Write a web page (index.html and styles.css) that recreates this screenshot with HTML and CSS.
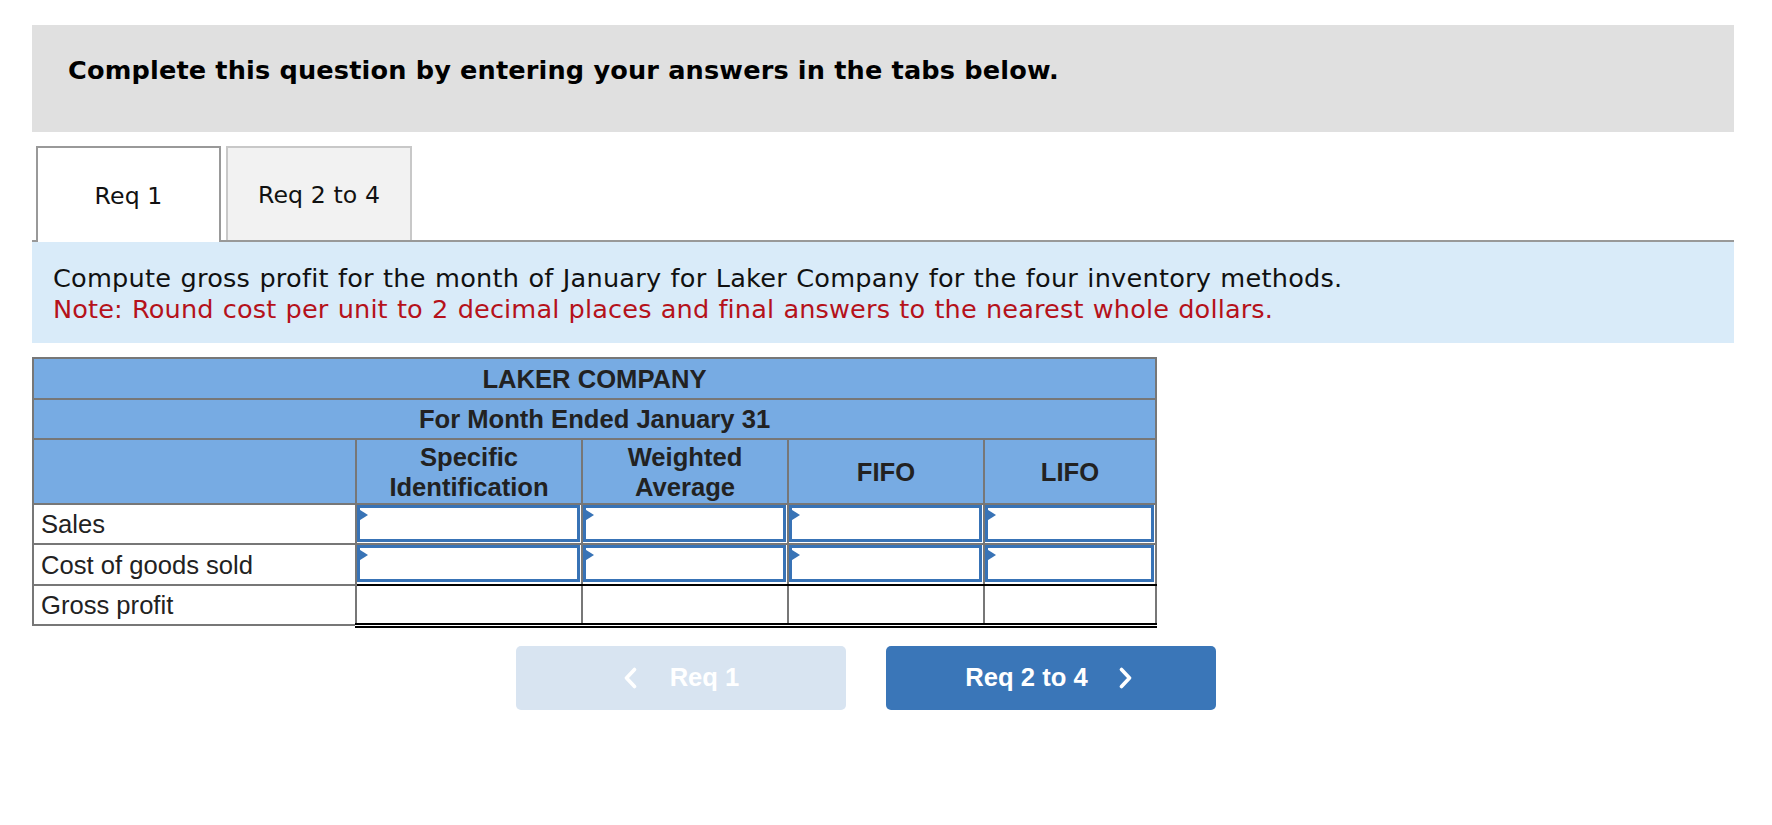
FILE: index.html
```html
<!DOCTYPE html>
<html lang="en">
<head>
<meta charset="utf-8">
<title>Laker Company</title>
<link rel="stylesheet" href="styles.css">
</head>
<body>
<div class="page">
  <div class="prompt">Complete this question by entering your answers in the tabs below.</div>

  <div class="tabs">
    <div class="tab tab-active">Req 1</div>
    <div class="tab tab-idle">Req 2 to 4</div>
  </div>

  <div class="instructions">
    <div class="instr-line">Compute gross profit for the month of January for Laker Company for the four inventory methods.</div>
    <div class="instr-line note">Note: Round cost per unit to 2 decimal places and final answers to the nearest whole dollars.</div>
  </div>

  <table class="sheet">
    <colgroup>
      <col class="c-label">
      <col class="c-spec">
      <col class="c-wa">
      <col class="c-fifo">
      <col class="c-lifo">
    </colgroup>
    <tr class="r-title">
      <th colspan="5">LAKER COMPANY</th>
    </tr>
    <tr class="r-title2">
      <th colspan="5">For Month Ended January 31</th>
    </tr>
    <tr class="r-head">
      <th></th>
      <th>Specific<br>Identification</th>
      <th>Weighted<br>Average</th>
      <th>FIFO</th>
      <th>LIFO</th>
    </tr>
    <tr class="r-data">
      <td class="label">Sales</td>
      <td class="val"><div class="inp"></div></td>
      <td class="val"><div class="inp"></div></td>
      <td class="val"><div class="inp"></div></td>
      <td class="val"><div class="inp"></div></td>
    </tr>
    <tr class="r-data r-cogs">
      <td class="label">Cost of goods sold</td>
      <td class="val"><div class="inp"></div></td>
      <td class="val"><div class="inp"></div></td>
      <td class="val"><div class="inp"></div></td>
      <td class="val"><div class="inp"></div></td>
    </tr>
    <tr class="r-total">
      <td class="label">Gross profit</td>
      <td class="tot"></td>
      <td class="tot"></td>
      <td class="tot"></td>
      <td class="tot"></td>
    </tr>
  </table>

  <div class="nav">
    <div class="btn btn-prev">
      <svg class="chev" width="14" height="22" viewBox="0 0 14 22"><polyline points="11.5,2.5 3.5,11 11.5,19.5" fill="none" stroke="#ffffff" stroke-width="3.6" stroke-linecap="round" stroke-linejoin="round"/></svg>
      <span>Req 1</span>
    </div>
    <div class="btn btn-next">
      <span>Req 2 to 4</span>
      <svg class="chev" width="14" height="22" viewBox="0 0 14 22"><polyline points="2.5,2.5 10.5,11 2.5,19.5" fill="none" stroke="#ffffff" stroke-width="3.6" stroke-linecap="round" stroke-linejoin="round"/></svg>
    </div>
  </div>
</div>
</body>
</html>
```
FILE: styles.css
```css
html, body {
  margin: 0;
  padding: 0;
  background: #ffffff;
}

.page {
  margin: 25px 0 0 32px;
  width: 1702px;
}

.prompt {
  background: #e0e0e0;
  height: 107px;
  box-sizing: border-box;
  padding: 30px 36px 0;
  font-family: "DejaVu Sans", Verdana, sans-serif;
  font-weight: bold;
  font-size: 25.6px;
  letter-spacing: 0.15px;
  line-height: 31px;
  color: #000;
}

.tabs {
  margin-top: 14px;
  height: 96px;
  box-sizing: border-box;
  border-bottom: 2px solid #999999;
  display: flex;
  align-items: flex-start;
  gap: 5px;
  padding-left: 4px;
}

.tab {
  box-sizing: border-box;
  display: flex;
  align-items: center;
  justify-content: center;
  padding-top: 2px;
  font-family: "DejaVu Sans", Verdana, sans-serif;
  font-size: 23.6px;
  letter-spacing: 0.1px;
  color: #111;
}

.tab-active {
  width: 185px;
  height: 96px;
  border: 2px solid #999999;
  border-bottom: none;
  background: #ffffff;
  position: relative;
  z-index: 1;
}

.tab-idle {
  width: 186px;
  height: 94px;
  border: 2px solid #c8c8c8;
  border-bottom: none;
  background: #f2f2f2;
}

.instructions {
  background: #d9ebf9;
  height: 101px;
  box-sizing: border-box;
  padding: 21px 21px 0;
  font-family: "DejaVu Sans", Verdana, sans-serif;
  font-size: 25.6px;
  letter-spacing: 0.22px;
  word-spacing: 0.9px;
  line-height: 31px;
  color: #111;
}

.note {
  color: #b5121b;
  letter-spacing: 0.13px;
}

.sheet {
  margin-top: 14px;
  border-collapse: collapse;
  table-layout: fixed;
  width: 1125px;
  font-family: "Liberation Sans", Arial, sans-serif;
  font-size: 25.6px;
  color: #222;
}

.c-label { width: 323px; }
.c-spec { width: 226px; }
.c-wa { width: 206px; }
.c-fifo { width: 196px; }
.c-lifo { width: 172px; }

.sheet th,
.sheet td {
  border: 2px solid #777777;
  padding: 0;
}

.sheet th {
  background: #77abe3;
  font-weight: bold;
  text-align: center;
  vertical-align: middle;
  line-height: 30px;
}

.r-title { height: 41px; }
.r-title2 { height: 40px; }
.r-head { height: 65px; }
.r-data { height: 40px; }
.r-cogs { height: 41px; }
.r-total { height: 40px; }

.sheet td.label {
  text-align: left;
  padding-left: 7px;
  vertical-align: middle;
  line-height: 30px;
}

.sheet td.val {
  vertical-align: top;
}

.r-cogs td.val {
  border-bottom: 2px solid #000000;
}

.inp {
  position: relative;
  box-sizing: border-box;
  height: 37px;
  margin: 0 1px 0 0;
  border: 3px solid #3873b6;
  background: #ffffff;
}

.inp::before {
  content: "";
  position: absolute;
  left: -3px;
  top: 0;
  width: 0;
  height: 0;
  border-left: 11px solid #3873b6;
  border-top: 7px solid transparent;
  border-bottom: 7px solid transparent;
}

.sheet td.tot {
  border-top: 2px solid #000000;
  border-bottom: 5px double #000000;
}

.nav {
  display: flex;
  gap: 40px;
  margin-top: 18px;
  padding-left: 484px;
}

.btn {
  width: 330px;
  height: 64px;
  box-sizing: border-box;
  border-radius: 5px;
  display: flex;
  align-items: center;
  justify-content: center;
  font-family: "Liberation Sans", Arial, sans-serif;
  font-weight: bold;
  font-size: 25.6px;
  color: #ffffff;
}

.btn-prev {
  background: #d8e4f1;
  gap: 33px;
}

.btn-next {
  background: #3a76b8;
  gap: 31px;
  padding-right: 4px;
}

.chev {
  display: block;
}
```
